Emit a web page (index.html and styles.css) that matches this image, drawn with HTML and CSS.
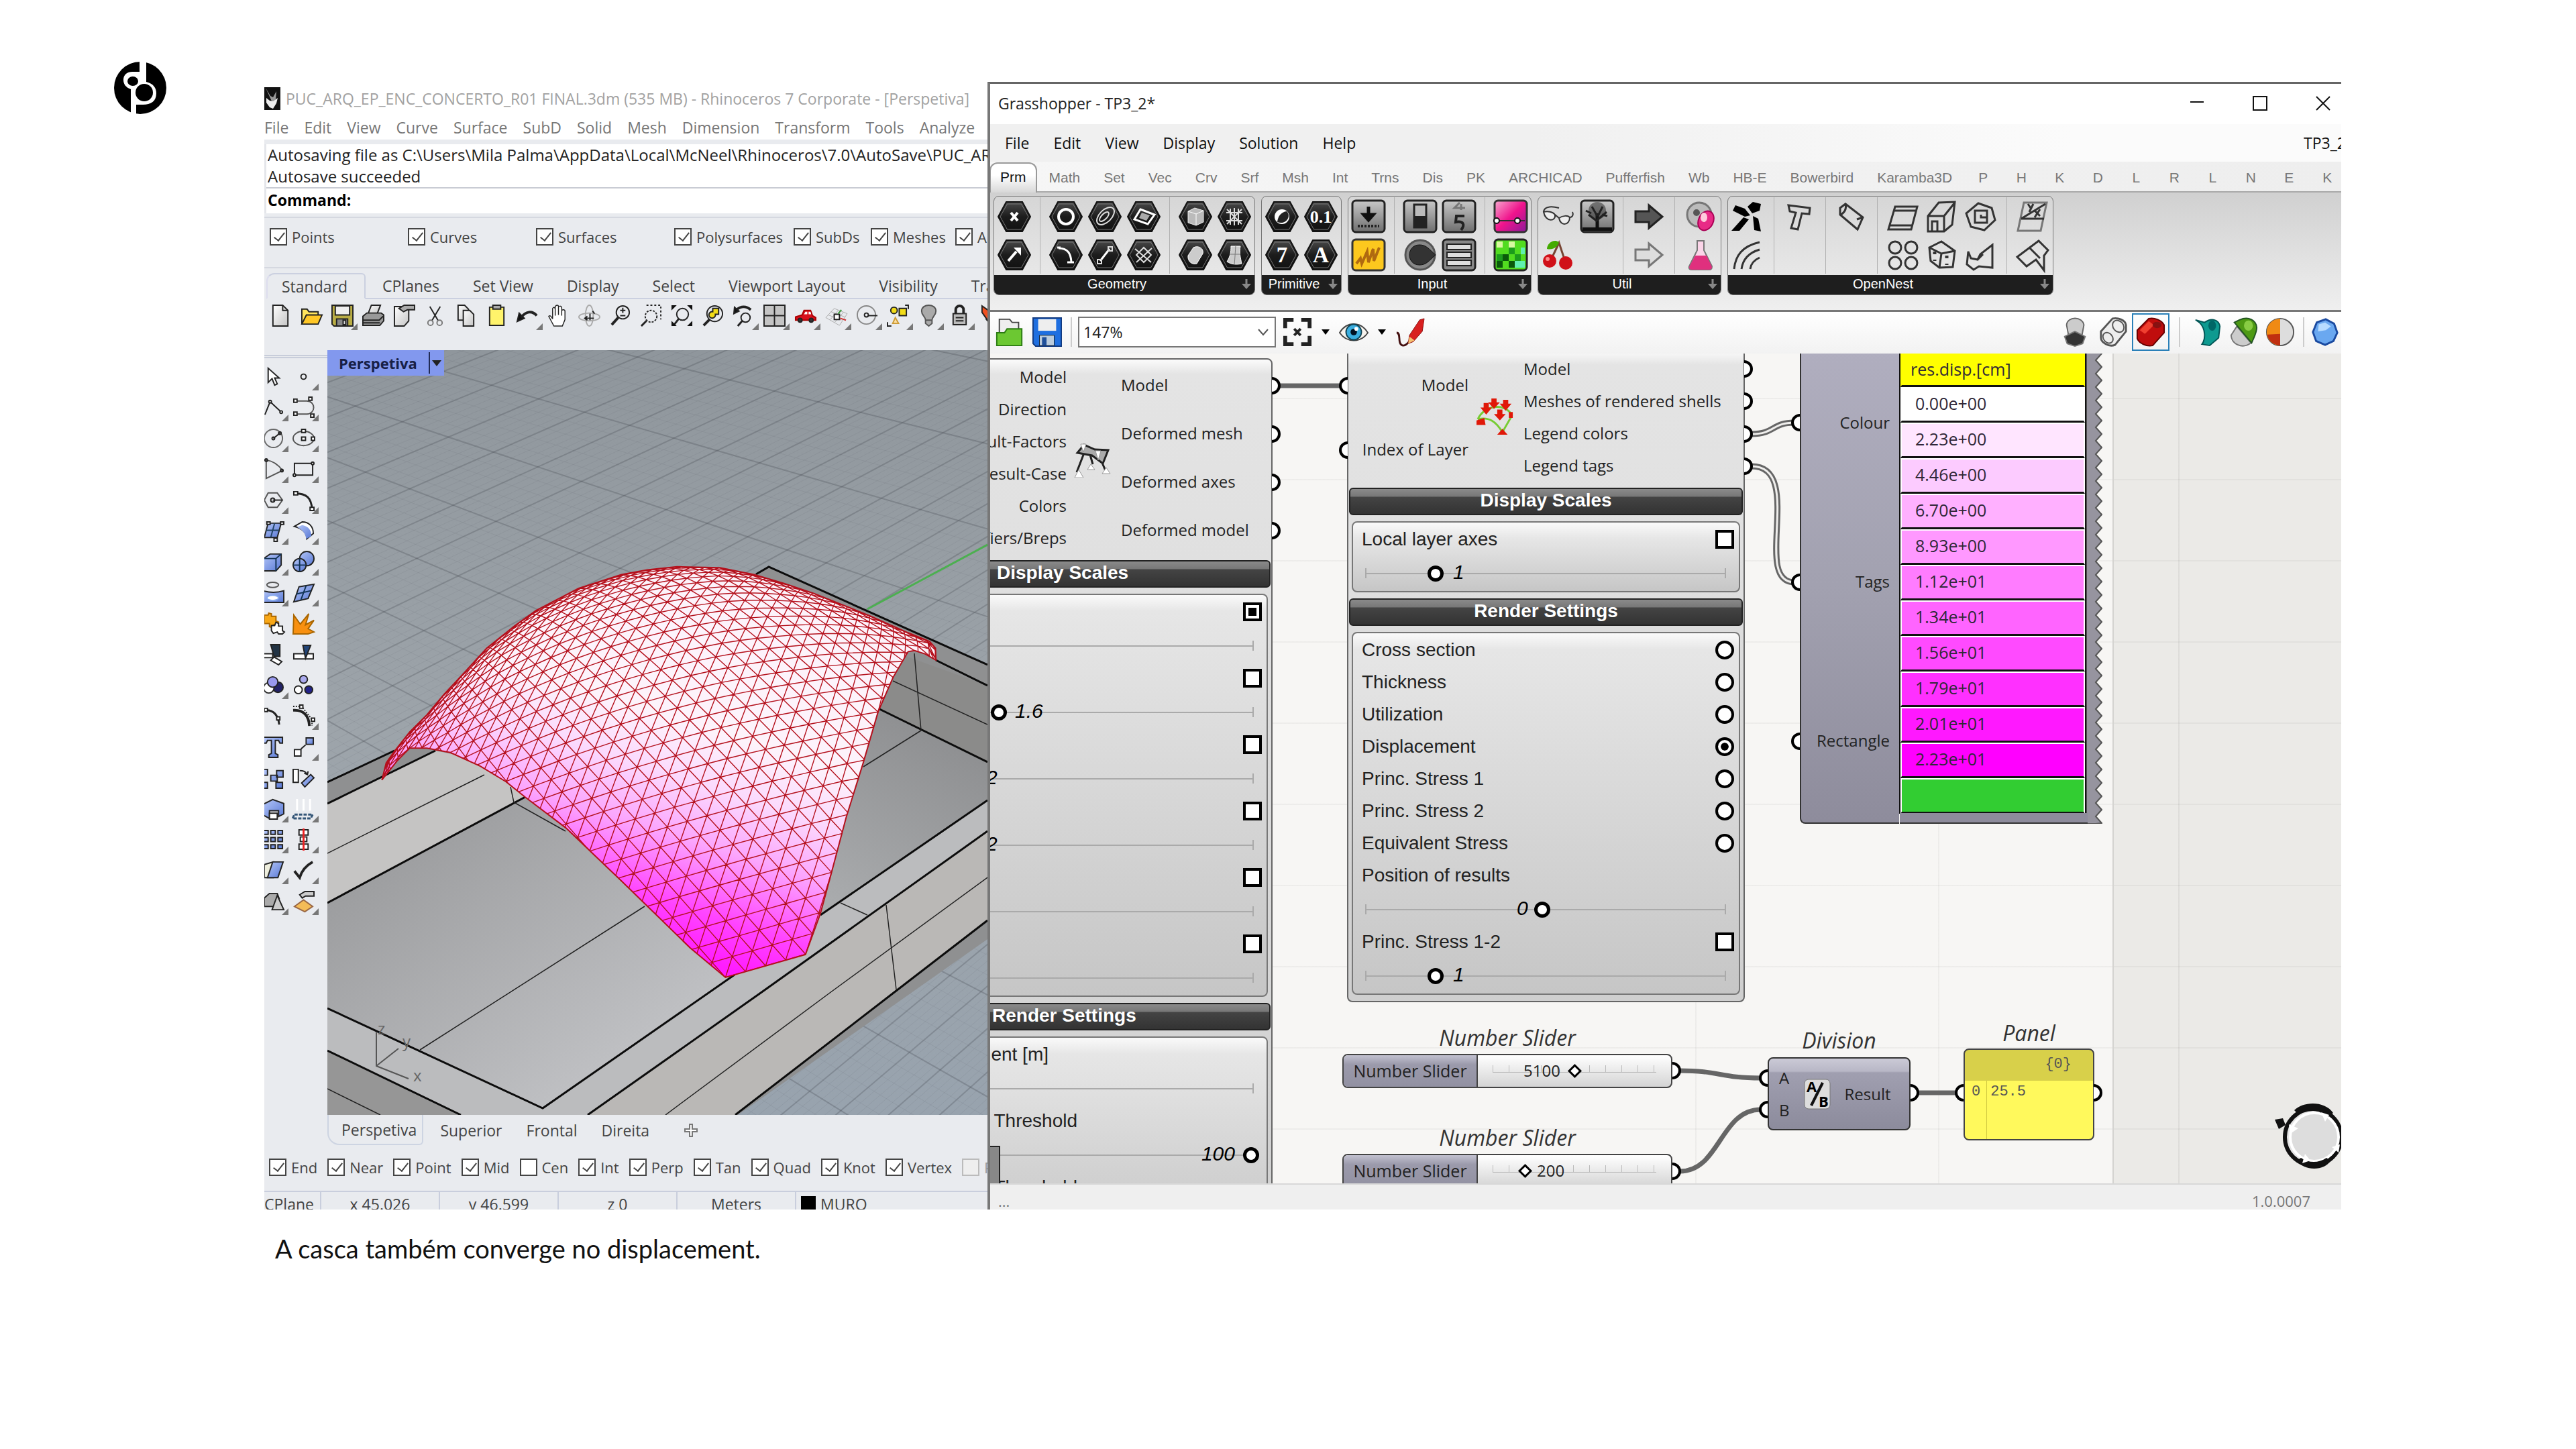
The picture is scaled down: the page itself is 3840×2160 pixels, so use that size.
FILE: index.html
```html
<!DOCTYPE html>
<html lang="pt">
<head>
<meta charset="utf-8">
<title>Casca - displacement</title>
<link rel="stylesheet" href="styles.css">
</head>
<body>
<svg class="defs" aria-hidden="true">
  <defs>
    <linearGradient id="hexg" x1="0" y1="0" x2="0" y2="1"><stop offset="0" stop-color="#4a4a4a"/><stop offset=".5" stop-color="#1c1c1c"/><stop offset="1" stop-color="#111"/></linearGradient>
    <linearGradient id="tileg" x1="0" y1="0" x2="0" y2="1"><stop offset="0" stop-color="#c8c8c8"/><stop offset="1" stop-color="#6e6e6e"/></linearGradient>
    <linearGradient id="blueg" x1="0" y1="0" x2="1" y2="1"><stop offset="0" stop-color="#b4c6f8"/><stop offset="1" stop-color="#5878d4"/></linearGradient>
    <linearGradient id="greyg" x1="0" y1="0" x2="1" y2="1"><stop offset="0" stop-color="#fff"/><stop offset="1" stop-color="#c5c5c5"/></linearGradient>
    <linearGradient id="pinkg" x1="0" y1="0" x2="1" y2="1"><stop offset="0" stop-color="#f7a8d0"/><stop offset=".5" stop-color="#f0148c"/><stop offset="1" stop-color="#8a1a9a"/></linearGradient>
    <symbol id="hex" viewBox="0 0 50 46"><path d="M13 1h24l12 22-12 22H13L1 23z" fill="url(#hexg)" stroke="#111" stroke-width="2"/><path d="M14.500 4h21L46 23 35.500 42h-21L4 23z" fill="none" stroke="#777" stroke-width="1"/></symbol>
    <symbol id="more" viewBox="0 0 16 16"><path d="M8 0v10" fill="none" stroke="#888" stroke-width="3"/><path d="M1 7h14l-7 8z" fill="#888"/></symbol>
  </defs>
</svg>
<main class="slide">
  <header class="brand">
    <svg class="logo" viewBox="0 0 78 78" role="img" aria-label="dp">
      <circle cx="39" cy="39" r="39"/>
      <path class="gap" d="M38 -1h10v31c11 3 15 9 15 17 0 12-8 17-20 17H33v18H25V41c-8-3-11-8-11-14 0-8 6-12 13-12h11z"/>
      <ellipse cx="28" cy="29" rx="8" ry="7"/><circle cx="45" cy="46" r="13"/>
    </svg>
  </header>
  <figure class="shot">
    <div class="desk">
      <section class="rhino">
        <header class="r-title">
          <svg class="r-logo" viewBox="0 0 24 34"><path fill="#111" d="M0 0h24v34H0z"/><path fill="#999" d="M2 1l7 12 4 2 5-9-1 12-5 5z"/><path fill="#eee" d="M3 16l5 4 5 1 7-5-2 8-5 8-5-2-5-7z"/></svg>
          <span>PUC_ARQ_EP_ENC_CONCERTO_R01 FINAL.3dm (535 MB) - Rhinoceros 7 Corporate - [Perspetiva]</span>
        </header>
        <nav class="r-menu"><a href="#">File</a><a href="#">Edit</a><a href="#">View</a><a href="#">Curve</a><a href="#">Surface</a><a href="#">SubD</a><a href="#">Solid</a><a href="#">Mesh</a><a href="#">Dimension</a><a href="#">Transform</a><a href="#">Tools</a><a href="#">Analyze</a></nav>
        <div class="r-log">
          <p>Autosaving file as C:\Users\Mila Palma\AppData\Local\McNeel\Rhinoceros\7.0\AutoSave\PUC_ARQ</p>
          <p>Autosave succeeded</p>
          <label class="r-cmd">Command: <input type="text"></label>
        </div>
        <div class="r-filter">
          <label class="chk"><input type="checkbox" checked>Points</label>
          <label class="chk"><input type="checkbox" checked>Curves</label>
          <label class="chk"><input type="checkbox" checked>Surfaces</label>
          <label class="chk"><input type="checkbox" checked>Polysurfaces</label>
          <label class="chk"><input type="checkbox" checked>SubDs</label>
          <label class="chk"><input type="checkbox" checked>Meshes</label>
          <label class="chk"><input type="checkbox" checked>Annotations</label>
        </div>
        <div class="r-tabs"><button class="on">Standard</button><button>CPlanes</button><button>Set View</button><button>Display</button><button>Select</button><button>Viewport Layout</button><button>Visibility</button><button>Transform</button></div>
        <div class="r-tools">
          <button><svg viewBox="0 0 34 34"><path class="pg" d="M5 1h15l8 8v24H5z"/><path d="M20 1v8h8"/></svg></button>
          <button><svg viewBox="0 0 34 34"><path fill="#ffe45c" d="M2 30V7h8l3 4h14v6"/><path fill="#ffc726" d="M2 30l7-14h24l-6 14z"/></svg></button>
          <button class="fly"><svg viewBox="0 0 34 34"><path fill="#b9ad45" d="M1 1h32v32H4l-3-3z"/><path fill="#eee" d="M6 2h22v14H6z"/><path fill="#888" d="M8 22h17v11H8z"/><path fill="#ddd" d="M18 24h4v7h-4z"/></svg></button>
          <button><svg viewBox="0 0 34 34"><path class="pg" d="M9 14l5-13h14l-5 13z"/><path fill="#999" d="M1 18l6-5h22l4 3v9l-6 7H1z"/><path d="M1 24h25l6-6M1 28h26"/></svg></button>
          <button><svg viewBox="0 0 34 34"><path class="pg" d="M2 3h22v22l-7 8H2z"/><path fill="#aaa" d="M9 6l8-5h16v7H22l-6 3z"/></svg></button>
          <button><svg viewBox="0 0 34 34"><path d="M9 3l13 22M25 3L12 25"/><circle cx="10" cy="28" r="4" stroke="#777"/><circle cx="24" cy="28" r="4" stroke="#777"/></svg></button>
          <button><svg viewBox="0 0 34 34"><path class="pg" d="M5 1h10l6 6v17H5z"/><path class="pg" d="M13 9h10l6 6v18H13z"/></svg></button>
          <button><svg viewBox="0 0 34 34"><path fill="#fff36b" d="M6 4h22v28H6z"/><path fill="#aaa" d="M11 1h12v6H11z"/></svg></button>
          <button class="fly"><svg viewBox="0 0 34 34"><path fill="#111" d="M1 26l3-13 8 8z"/><path stroke-width="4" d="M7 20C14 10 24 9 31 17"/></svg></button>
          <button><svg viewBox="0 0 34 34"><path fill="#fff" stroke-width="1.500" d="M10 33L2 18c2-2 4 0 6 4V6c2-3 4-1 4 1v10V3c2-3 5-2 5 0v13V4c2-3 5-1 5 1v12V9c2-2 5-1 5 1v13l-4 10z"/></svg></button>
          <button><svg viewBox="0 0 34 34"><ellipse cx="17" cy="17" rx="6" ry="16" stroke="#aaa"/><ellipse cx="17" cy="19" rx="16" ry="6" stroke="#aaa"/><path d="M12 21h12M18 14v10M14 18l-4 3 4 3M22 10l3 4"/></svg></button>
          <button><svg viewBox="0 0 34 34"><circle cx="21" cy="12" r="10"/><path d="M17 9h8M21 5v8M17 17h8"/><path stroke-width="4" d="M14 20L4 31"/></svg></button>
          <button><svg viewBox="0 0 34 34"><path stroke-dasharray="3 3" d="M10 1h22v22"/><circle cx="17" cy="18" r="9" stroke-dasharray="3 2"/><path stroke-width="3" d="M10 25L2 33"/></svg></button>
          <button><svg viewBox="0 0 34 34"><circle cx="18" cy="15" r="9"/><path stroke-width="3" d="M12 22L5 31"/><path fill="#111" d="M1 1h8L1 9zM33 1v8l-8-8zM1 33v-8l8 8zM33 33h-8l8-8z" stroke="none"/></svg></button>
          <button><svg viewBox="0 0 34 34"><circle cx="20" cy="14" r="12"/><path fill="#f2dc18" d="M17 6h9v9h-5a5 5 0 1 1-4-4z"/><path stroke-width="4" d="M12 23L3 32"/></svg></button>
          <button class="fly"><svg viewBox="0 0 34 34"><path fill="#111" d="M2 14l1-10 7 6z"/><path stroke-width="4" d="M6 8c7-6 15-6 22 0"/><circle cx="20" cy="20" r="7"/><path stroke-width="3" d="M15 25l-7 8"/></svg></button>
          <button class="fly"><svg viewBox="0 0 34 34"><path fill="#c4c4c4" d="M1 1h32v32H1z"/><path d="M17 1v32M1 17h32"/></svg></button>
          <button class="fly"><svg viewBox="0 0 34 34"><path fill="#d8101c" stroke="#a00" d="M2 19l10-3 3-7h10l3 8 5 3v4H2z"/><path fill="#fff" stroke="none" d="M15 15l2-4h3v4zM22 11h3l1 4h-4z"/><circle cx="9" cy="24" r="3" fill="#333"/><circle cx="26" cy="24" r="3" fill="#333"/></svg></button>
          <button class="fly"><svg viewBox="0 0 34 34"><path stroke="#aaa" stroke-width="1" d="M1 20L14 6l20 8-12 18zM5 16l20 8M9 11l21 8M8 23L20 9M15 27L28 12"/><path fill="#fff" d="M14 15h8v8h-8z"/><path stroke="#393" d="M20 14l5-6"/><path stroke="#c33" d="M23 21l9 3"/></svg></button>
          <button class="fly"><svg viewBox="0 0 34 34"><circle cx="16" cy="16" r="14" stroke="#888"/><circle cx="16" cy="16" r="3"/><path d="M19 17h14"/></svg></button>
          <button class="fly"><svg viewBox="0 0 34 34"><circle cx="11" cy="9" r="5" fill="#f2dc18"/><path fill="#f2dc18" d="M19 6h11v11H19z"/><path fill="#ffe0a0" stroke="#c93" d="M13 20l5 9H9z"/><path d="M28 1h5v6M1 27v6h6"/></svg></button>
          <button class="fly"><svg viewBox="0 0 34 34"><path fill="#aaa" stroke="#555" d="M12 24c0-6-6-7-6-14 0-12 22-12 22 0 0 7-6 8-6 14v5l-5 4-5-4zM12 24h10"/></svg></button>
          <button class="fly"><svg viewBox="0 0 34 34"><path stroke-width="4" d="M11 15V8c0-8 12-8 12 0v7"/><path fill="#bbb" d="M7 14h20v17H7z"/><path d="M11 20h12M11 25h12"/></svg></button>
          <button><svg viewBox="0 0 34 34"><path fill="#f05020" d="M4 2l14 10v20L4 12z"/><path fill="#28a" d="M10 22l10 8v4z"/></svg></button>
        </div>
        <div class="r-body">
          <aside class="r-side">
            <button><svg viewBox="0 0 34 34"><path fill="#fff" d="M9 4v22l6-6 4 10 4-2-4-9h7z"/></svg></button>
            <button class="fly"><svg viewBox="0 0 34 34"><circle cx="17" cy="17" r="4"/></svg></button>
            <button class="fly"><svg viewBox="0 0 34 34"><path d="M4 28L12 8l17 16"/><circle cx="12" cy="8" r="2" fill="#fff"/><circle cx="29" cy="24" r="2" fill="#fff"/></svg></button>
            <button class="fly"><svg viewBox="0 0 34 34"><path d="M4 7h18c14 0 14 20 0 20H4" stroke="#555"/><path fill="#fff" d="M2 4h5v5H2zM2 24h5v5H2zM25 1h5v5h-5zM28 27h5v5h-5z"/></svg></button>
            <button class="fly"><svg viewBox="0 0 34 34"><circle cx="17" cy="17" r="14" stroke="#666"/><path d="M17 17l10-8"/><circle cx="17" cy="17" r="2"/><circle cx="27" cy="9" r="2"/></svg></button>
            <button class="fly"><svg viewBox="0 0 34 34"><ellipse cx="17" cy="17" rx="16" ry="11" stroke="#555"/><path fill="#fff" d="M14 3h6v5h-6zM14 15h6v5h-6zM29 15h5v5h-5z"/></svg></button>
            <button class="fly"><svg viewBox="0 0 34 34"><path d="M6 3v28l25-12C24 9 14 4 6 3z" stroke="#555"/><circle cx="6" cy="3" r="2"/><circle cx="30" cy="19" r="2"/></svg></button>
            <button class="fly"><svg viewBox="0 0 34 34"><path d="M3 8h28v18H3z"/><circle cx="31" cy="8" r="2" fill="#fff"/><circle cx="3" cy="26" r="2" fill="#fff"/></svg></button>
            <button class="fly"><svg viewBox="0 0 34 34"><path d="M3 17l6-11h14l8 11-8 11H9z" stroke="#555"/><circle cx="16" cy="17" r="3"/><path d="M16 17h15"/></svg></button>
            <button class="fly"><svg viewBox="0 0 34 34"><path d="M5 7c16 0 24 6 25 24" stroke-width="3"/><path fill="#fff" d="M2 4h6v5H2zM27 28h6v5h-6z"/></svg></button>
            <button class="fly"><svg viewBox="0 0 34 34"><path class="bl" d="M9 5h20l-6 22H3z"/><path d="M6 16h20M19 5l-6 22" stroke="#246"/><path fill="#fff" d="M7 3h5v4H7zM28 3h5v4h-5zM18 28h5v5h-5z"/></svg></button>
            <button class="fly"><svg viewBox="0 0 34 34"><path fill="#fff" d="M3 10l12-7c10 0 17 7 17 18l-10 8c0-8-6-16-19-19z"/><path class="bl" d="M15 8c10 2 14 8 14 17l-8 4c-1-9-6-14-14-18z" stroke="none"/></svg></button>
            <button class="fly"><svg viewBox="0 0 34 34"><path class="bl" d="M2 12l10-7h17v17l-8 9H2z"/><path d="M2 12h19l8-7M21 12v19" stroke="#135"/></svg></button>
            <button class="fly"><svg viewBox="0 0 34 34"><circle cx="22" cy="12" r="11" class="bl"/><circle cx="11" cy="22" r="10" class="bl"/><path d="M1 22h20M11 12v20" stroke="#135"/></svg></button>
            <button class="fly"><svg viewBox="0 0 34 34"><ellipse cx="16" cy="5" rx="9" ry="4" stroke="#555"/><path class="bl" d="M1 14c10 3 22 3 32 0v18H1z"/><ellipse cx="16" cy="25" rx="9" ry="4" fill="#fff" stroke="#8ae"/></svg></button>
            <button class="fly"><svg viewBox="0 0 34 34"><path class="bl" d="M10 8l23-4-9 22-22 5z"/><path d="M6 19l22-5M21 6l-8 22" stroke="#135"/></svg></button>
            <button><svg viewBox="0 0 34 34"><path fill="#f8a818" stroke="#a60" d="M3 4h6l1-3 4 1v4h7v7l4 2-2 4h-6l-2 4-4-1v-5H3z"/><path fill="#fff" d="M14 20h5l2-5 4 2v4h6v7l3 2-3 3h-6l-2-3-6 2-3-4z"/></svg></button>
            <button><svg viewBox="0 0 34 34"><path fill="#f89010" stroke="#a60" d="M1 33L2 4l10 14L25 2l-5 17 13-7-9 13 9 5-9 3z"/></svg></button>
            <button><svg viewBox="0 0 34 34"><path fill="#234" d="M13 2h14v18H18z"/><path fill="#fff" d="M1 16h15v6H1zM18 21l12 7-5 5-12-7z"/></svg></button>
            <button><svg viewBox="0 0 34 34"><path fill="#fff" d="M2 16h30v8H2z"/><path fill="#247" d="M16 3h12L20 23z"/></svg></button>
            <button class="fly"><svg viewBox="0 0 34 34"><circle cx="24" cy="20" r="8" fill="#226"/><circle cx="10" cy="21" r="8" fill="#fff"/><circle cx="16" cy="12" r="8" fill="#99e"/></svg></button>
            <button><svg viewBox="0 0 34 34"><circle cx="17" cy="8" r="6" fill="#aae"/><circle cx="9" cy="24" r="6" fill="#fff"/><circle cx="25" cy="24" r="6" fill="#228"/></svg></button>
            <button><svg viewBox="0 0 34 34"><path d="M4 8c12-1 20 6 22 22" stroke-width="3"/><path fill="#fff" d="M3 5h5v5H3zM22 18h5v5h-5z"/></svg></button>
            <button class="fly"><svg viewBox="0 0 34 34"><path d="M1 8c16-1 24 8 25 24" stroke-width="4"/><path stroke-dasharray="2 2" d="M1 2h13l16 20v10"/><path fill="#fff" d="M11 0h5v5h-5zM29 20h5v5h-5z"/></svg></button>
            <button><svg viewBox="0 0 34 34"><path class="bl" d="M2 2h29v9h-4l-2-4h-5v20l4 2v4H10v-4l4-2V7H8l-2 4H2z"/></svg></button>
            <button class="fly"><svg viewBox="0 0 34 34"><path class="bl" d="M21 3h11v10H21z"/><path fill="#fff" d="M3 21h10v10H3z"/><path d="M13 20l7-6"/></svg></button>
            <button><svg viewBox="0 0 34 34"><path class="bl" d="M0 4h8v9H0zM13 13h10v9H13zM22 6h10v10H22zM21 24h10v9H21zM0 24h8v9H0z"/></svg></button>
            <button><svg viewBox="0 0 34 34"><path fill="#fff" d="M1 4h8v20H1z"/><path class="bl" d="M14 25l14-13 5 5-14 14z"/><path d="M11 6c6 0 9 1 11 5M18 10l5 2 1-5"/></svg></button>
            <button class="fly"><svg viewBox="0 0 34 34"><path class="bl" d="M2 10l14-7 17 6v16l-8 4v-9H11v12l-9-5z"/><path fill="#fff" d="M11 24h12v9H11z"/></svg></button>
            <button class="fly"><svg viewBox="0 0 34 34"><path stroke="#fff" stroke-width="3" d="M7 2v18M17 2v18M27 2v18"/><path stroke="#357" stroke-width="3" d="M3 26h28l-3 6H0z" stroke-dasharray="5 2"/></svg></button>
            <button class="fly"><svg viewBox="0 0 34 34"><path class="bl" d="M2 3h7v6H2zM13 3h7v6h-7zM24 3h7v6h-7zM2 14h7v6H2zM13 14h7v6h-7zM24 14h7v6h-7zM2 25h7v6H2zM13 25h7v6h-7zM24 25h7v6h-7z"/></svg></button>
            <button class="fly"><svg viewBox="0 0 34 34"><path fill="#fff" d="M10 2h14v8H10zM12 13h10v7H12zM10 24h14v8H10z"/><path stroke="#e22" stroke-width="3" d="M17 0v34"/></svg></button>
            <button class="fly"><svg viewBox="0 0 34 34"><path fill="#eed" d="M3 8l14-4v24H3z"/><path class="bl" d="M16 4h16l-8 24H8z"/></svg></button>
            <button class="fly"><svg viewBox="0 0 34 34"><path stroke-width="4" d="M3 18l8 10C14 18 22 9 31 4"/></svg></button>
            <button class="fly"><svg viewBox="0 0 34 34"><path fill="#aaa" d="M3 12l8-7h12l3 8-9 12H3z"/><path fill="#ccc" d="M15 30l8-22 10 22z"/></svg></button>
            <button class="fly"><svg viewBox="0 0 34 34"><path fill="#f4bc58" stroke="#964" d="M3 25l14-10 14 10-12 8z"/><path fill="#ccc" d="M11 7l8-5h14v7H20l-5 3z"/></svg></button>
          </aside>
          <div class="view">
            <svg class="scene" viewBox="488 522 984 1140" preserveAspectRatio="xMidYMid slice">
              <defs>
                <linearGradient id="sky" x1="0" y1="0" x2="0" y2="1"><stop offset="0" stop-color="#8f969c"/><stop offset=".5" stop-color="#9da4aa"/><stop offset="1" stop-color="#98a3ae"/></linearGradient>
                <linearGradient id="floor" gradientUnits="userSpaceOnUse" x1="640" y1="1240" x2="900" y2="1600"><stop offset="0" stop-color="#9d9ea0"/><stop offset="1" stop-color="#bfc0c3"/></linearGradient>
                <linearGradient id="floor2" gradientUnits="userSpaceOnUse" x1="1400" y1="1060" x2="1250" y2="1350"><stop offset="0" stop-color="#8c8d8f"/><stop offset="1" stop-color="#a9abad"/></linearGradient>
                <linearGradient id="disp" gradientUnits="userSpaceOnUse" x1="1075" y1="1440" x2="1175" y2="1125"><stop offset="0" stop-color="#ff1cff"/><stop offset=".2" stop-color="#ff44ff"/><stop offset=".5" stop-color="#fba6fd"/><stop offset=".75" stop-color="#fbd9fd"/><stop offset="1" stop-color="#fdf3fb"/></linearGradient>
                <clipPath id="shell"><path id="shell-clip" d=""/></clipPath>
              </defs>
              <path fill="url(#sky)" d="M488 522h984v1140H488z"/>
              <g id="grid"></g>
              <path stroke="#4caf50" stroke-width="3" d="M1293 908L1472 812"/>
              <path fill="#8f9091" d="M488 1166L1146 845 1472 991V1400L1100 1662H488z"/>
              <path fill="#8b8b8a" d="M1300 960L1472 1022V1136L1300 1050z"/>
              <path fill="#c5c4c3" d="M488 1198L649 1119 800 1150V1188L783 1188 488 1346z"/>
              <path fill="url(#floor)" d="M488 1346L783 1188 1250 1110 1223 1364 809 1652 488 1503z"/>
              <path fill="url(#floor2)" d="M1200 1160L1309 1056 1472 1136V1193L1223 1364z"/>
              <path fill="#bbbcbe" d="M488 1503L809 1652 1223 1364 1472 1193V1239L876 1662H687L488 1566z"/>
              <path fill="#969696" d="M488 1566L687 1662H488z"/>
              <path fill="#bab8b6" d="M876 1662L1472 1239V1372L1096 1662z"/>
              <g class="edge">
                <path d="M488 1166L588 1119M488 1198L649 1119M488 1346L783 1188M1127 856l19-11L1472 991M1395 984l77 38M1309 1056l163 80M488 1503L809 1652 1095 1453M1223 1364L1472 1193M876 1662L1134 1480 1472 1239M1096 1662L1332 1480 1472 1372M488 1566L687 1662"/>
                <path class="thin" d="M488 1272L722 1155M761 1173l5 23 77 43M626 1565L961 1351M1331 1015l141 65M1363 974l10 115-86 54M1253 1346l40 18M1321 1349l15 126M992 1662L1237 1480 1472 1308M488 1623l79 39"/>
              </g>
              <path id="shell-fill" fill="url(#disp)" d=""/>
              <g id="mesh" clip-path="url(#shell)"></g>
              <path id="shell-line" class="rim" d=""/>
              <g class="axis"><path d="M561 1538v51l48 19M561 1589l33-26"/><text x="563" y="1542">z</text><text x="600" y="1561">y</text><text x="616" y="1612">x</text></g>
            </svg>
            <button class="view-name">Perspetiva<i></i></button>
          </div>
        </div>
        <div class="v-tabs"><button class="on">Perspetiva</button><button>Superior</button><button>Frontal</button><button>Direita</button><button aria-label="+"><svg viewBox="0 0 20 20"><path d="M8 1h4v7h7v4h-7v7H8v-7H1V8h7z"/></svg></button></div>
        <div class="r-snap">
          <label class="chk"><input type="checkbox" checked>End</label><label class="chk"><input type="checkbox" checked>Near</label><label class="chk"><input type="checkbox" checked>Point</label><label class="chk"><input type="checkbox" checked>Mid</label><label class="chk"><input type="checkbox">Cen</label><label class="chk"><input type="checkbox" checked>Int</label><label class="chk"><input type="checkbox" checked>Perp</label><label class="chk"><input type="checkbox" checked>Tan</label><label class="chk"><input type="checkbox" checked>Quad</label><label class="chk"><input type="checkbox" checked>Knot</label><label class="chk"><input type="checkbox" checked>Vertex</label><label class="chk off"><input type="checkbox" disabled>Project</label>
        </div>
        <footer class="r-status"><span>CPlane</span><span>x 45.026</span><span>y 46.599</span><span>z 0</span><span>Meters</span><span><b class="swatch"></b>MURO</span></footer>
      </section>

      <section class="gh">
        <header class="g-title"><span>Grasshopper - TP3_2*</span>
          <button aria-label="Minimize"><svg viewBox="0 0 22 22"><path d="M1 9h20"/></svg></button>
          <button aria-label="Maximize"><svg viewBox="0 0 22 22"><path d="M1 1h20v20H1z"/></svg></button>
          <button aria-label="Close"><svg viewBox="0 0 22 22"><path d="M1 1l20 20M21 1L1 21"/></svg></button>
        </header>
        <nav class="g-menu"><a href="#">File</a><a href="#">Edit</a><a href="#">View</a><a href="#">Display</a><a href="#">Solution</a><a href="#">Help</a><span>TP3_2*</span></nav>
        <div class="g-tabs"><button class="on">Prm</button><button>Math</button><button>Set</button><button>Vec</button><button>Crv</button><button>Srf</button><button>Msh</button><button>Int</button><button>Trns</button><button>Dis</button><button>PK</button><button>ARCHICAD</button><button>Pufferfish</button><button>Wb</button><button>HB-E</button><button>Bowerbird</button><button>Karamba3D</button><button>P</button><button>H</button><button>K</button><button>D</button><button>L</button><button>R</button><button>L</button><button>N</button><button>E</button><button>K</button></div>
        <div class="ribbon">
          <section class="grp">
            <div class="grp-body">
              <div class="cells">
                <svg viewBox="0 0 50 46"><use href="#hex"/><path class="w4" d="M20 17l10 12M30 17L20 29"/></svg>
                <svg viewBox="0 0 50 46"><use href="#hex"/><path class="w4" d="M16 32l12-14"/><path class="wf" d="M24 12h11v12z"/></svg>
              </div>
              <div class="cells">
                <svg viewBox="0 0 50 46"><use href="#hex"/><circle cx="25" cy="23" r="11" class="w4"/></svg>
                <svg viewBox="0 0 50 46"><use href="#hex"/><path class="w3" d="M14 13c14 0 18 8 19 20M27 34h10M12 12h5"/></svg>
                <svg viewBox="0 0 50 46"><use href="#hex"/><ellipse cx="26" cy="22" rx="16" ry="9" class="w2" transform="rotate(-45 26 22)"/><ellipse cx="24" cy="23" rx="9" ry="4" class="w2" transform="rotate(-45 24 23)"/></svg>
                <svg viewBox="0 0 50 46"><use href="#hex"/><path class="w3" d="M18 32l14-18"/><path class="w2" d="M30 11h6v6h-6zM14 30h6v6h-6z"/></svg>
                <svg viewBox="0 0 50 46"><use href="#hex"/><path class="w3" d="M20 12l21 8-10 14-20-7z"/><path fill="#aaa" d="M22 17l12 4-5 8-11-4z"/></svg>
                <svg viewBox="0 0 50 46"><use href="#hex"/><path class="w2" d="M25 12l11 11-11 11-11-11zM12 14l24 20M37 13L14 34"/></svg>
              </div>
              <div class="cells">
                <svg viewBox="0 0 50 46"><use href="#hex"/><path fill="#bbb" stroke="#eee" d="M14 15l10-5 13 4v17l-11 5-12-4z"/><path stroke="#fff" fill="none" d="M14 15l12 4v17M26 19l11-5"/></svg>
                <svg viewBox="0 0 50 46"><use href="#hex"/><path fill="#ccc" stroke="#fff" d="M14 24l8-12c8-4 16 2 14 9l-9 15c-8 2-14-4-13-12z"/></svg>
                <svg viewBox="0 0 50 46"><use href="#hex"/><path class="w2" d="M13 17h24M13 29h24M19 11v24M31 11v24M14 12l22 22M36 12L14 34M25 10v26"/></svg>
                <svg viewBox="0 0 50 46"><use href="#hex"/><path fill="#ccc" stroke="#fff" d="M20 10h14c-2 10 0 16 2 26-8 2-16 1-22-3 5-8 6-14 6-23z"/><path stroke="#777" fill="none" d="M27 10c-1 12-1 18-2 27M18 22h16"/></svg>
              </div>
            </div>
            <h3>Geometry<svg><use href="#more"/></svg></h3>
          </section>
          <section class="grp">
            <div class="grp-body">
              <div class="cells">
                <svg viewBox="0 0 50 46"><use href="#hex"/><circle cx="25" cy="23" r="11" fill="#fff"/><path fill="#222" d="M32 15c-8 1-13 7-14 16 12 5 22-8 14-16z"/></svg>
                <svg viewBox="0 0 50 46"><use href="#hex"/><text x="25" y="34">7</text></svg>
                <svg viewBox="0 0 50 46"><use href="#hex"/><text x="25" y="32" class="sm">0.1</text></svg>
                <svg viewBox="0 0 50 46"><use href="#hex"/><text x="25" y="34">A</text></svg>
              </div>
            </div>
            <h3>Primitive<svg><use href="#more"/></svg></h3>
          </section>
          <section class="grp">
            <div class="grp-body">
              <div class="cells">
                <svg viewBox="0 0 50 46"><rect x="1" y="-1" width="48" height="47" rx="5" class="tile"/><path d="M25 8v16M18 20l7 8 7-8z" stroke="#111" stroke-width="5"/><path stroke="#222" stroke-width="4" stroke-dasharray="3 2" d="M9 37h32"/></svg>
                <svg viewBox="0 0 50 46"><rect x="1" y="0" width="48" height="46" rx="5" fill="#fcc81e" stroke="#333" stroke-width="3"/><path fill="none" stroke="#b06a10" stroke-width="4" d="M7 36l6-8 2 8 8-18 2 16 7-20 1 18 8-20"/></svg>
              </div>
              <div class="cells">
                <svg viewBox="0 0 50 46"><rect x="1" y="-1" width="48" height="47" rx="5" class="tile"/><path fill="#bbb" stroke="#222" stroke-width="3" d="M16 5h18v34H16z"/><path fill="#222" d="M16 22h18v17H16z"/></svg>
                <svg viewBox="0 0 50 46"><circle cx="25" cy="23" r="22" fill="#888" stroke="#555" stroke-width="3"/><path fill="#333" stroke="#111" d="M24 8c10 0 14 6 24 15-10 9-14 15-24 15-20 0-20-30 0-30z"/></svg>
                <svg viewBox="0 0 50 46"><rect x="1" y="-1" width="48" height="47" rx="5" class="tile"/><path fill="none" stroke="#777" stroke-width="3" d="M26 2l-8 8h16M28 4v9"/><path fill="none" stroke="#222" stroke-width="4" d="M33 22H21l-1 9c12-2 14 4 8 12"/></svg>
                <svg viewBox="0 0 50 46"><rect x="1" y="0" width="48" height="46" rx="5" fill="#888" stroke="#222" stroke-width="3"/><path fill="#ddd" stroke="#222" stroke-width="2" d="M7 7h36v8H7zM7 19h36v8H7zM7 31h36v8H7z"/></svg>
              </div>
              <div class="cells">
                <svg viewBox="0 0 50 46"><rect x="1" y="-1" width="48" height="47" rx="5" fill="url(#pinkg)" stroke="#333" stroke-width="3"/><path stroke="#333" stroke-width="2" d="M4 29h42"/><circle cx="4" cy="29" r="4" fill="#fff" stroke="#111" stroke-width="2"/><circle cx="35" cy="29" r="4" fill="#fff" stroke="#111" stroke-width="2"/></svg>
                <svg viewBox="0 0 50 46"><rect x="1" y="0" width="48" height="46" rx="5" fill="#52dc20" stroke="#222" stroke-width="3"/><path fill="#d8f8a0" d="M4 3h9v9H4zM22 3h9v9h-9z"/><path fill="#0a5a0a" d="M13 22h9v10h-9zM4 32h9v10H4zM22 32h9v10h-9z"/><path fill="#1c9c1c" d="M22 12h9v10h-9zM4 22h9v10H4zM31 22h9v10h-9z"/><path fill="#60f0b0" d="M31 32h15v10H31zM40 12h6v10h-6z"/></svg>
              </div>
            </div>
            <h3>Input<svg><use href="#more"/></svg></h3>
          </section>
          <section class="grp">
            <div class="grp-body">
              <div class="cells">
                <svg viewBox="0 0 50 46"><path fill="#eee" stroke="#333" stroke-width="2" d="M3 16c6-2 14 0 17 4 2 10-14 12-17-4zM26 25c6-4 13-4 16-1 0 12-14 14-16 1zM20 20l6 5"/><path fill="none" stroke="#333" stroke-width="2" d="M3 16C4 6 18 8 26 10M42 24c4 0 6-4 4-8"/></svg>
                <svg viewBox="0 0 50 46"><path fill="none" stroke="#743" stroke-width="3" d="M16 26L26 5l8 24"/><path fill="#4a0" d="M26 4C18-2 8 6 8 14c8 2 16-2 18-10z"/><circle cx="12" cy="32" r="10" fill="#d01018"/><circle cx="36" cy="35" r="10" fill="#d01018"/><circle cx="9" cy="29" r="3" fill="#f88"/></svg>
                <svg viewBox="0 0 50 46"><rect x="1" y="-1" width="48" height="47" rx="5" class="tile"/><path stroke="#111" stroke-width="5" d="M25 40V18"/><path fill="none" stroke="#222" stroke-width="3" d="M25 30L12 20M25 28l14-12M25 22l-8-14M26 22l7-14M8 14l8 4M40 22l-8-2"/><circle cx="25" cy="14" r="13" fill="#222" opacity=".5"/><path fill="#111" d="M3 39h44v5H3z"/></svg>
                <span></span>
              </div>
              <div class="cells">
                <svg viewBox="0 0 50 46"><path fill="#555" stroke="#222" stroke-width="3" d="M5 15h20V6l20 17-20 17v-9H5z"/></svg>
                <svg viewBox="0 0 50 46"><path fill="#ddd" stroke="#777" stroke-width="3" d="M5 15h20V6l20 17-20 17v-9H5z"/></svg>
              </div>
              <div class="cells">
                <svg viewBox="0 0 50 46"><circle cx="23" cy="20" r="18" fill="#bbb" stroke="#777" stroke-width="3"/><circle cx="19" cy="17" r="5" fill="#555"/><ellipse cx="33" cy="29" rx="11" ry="15" fill="#e82a86" stroke="#a05" stroke-width="2" transform="rotate(25 33 29)"/><ellipse cx="30" cy="24" rx="5" ry="7" fill="#fcd"/></svg>
                <svg viewBox="0 0 50 46"><path fill="#fbd4e8" stroke="#777" stroke-width="2" d="M20 2h10v14l12 24c0 4-2 5-4 5H12c-3 0-5-1-4-5l12-24z"/><path fill="#e0307e" d="M17 24h17l8 17c0 2-2 4-4 4H12c-3 0-4-2-4-4z"/></svg>
              </div>
            </div>
            <h3>Util<svg><use href="#more"/></svg></h3>
          </section>
          <section class="grp">
            <div class="grp-body">
              <div class="cells ln">
                <svg viewBox="0 0 50 46"><path fill="#000" stroke="none" d="M24 8l8-7 12 3-2 10-11 4zM2 14l4-8 14 5 8 10-8 2zM18 24l8 3-14 17H0zM32 22l8 4 4 19-10-2z"/></svg>
                <svg viewBox="0 0 50 46"><path d="M4 44C6 24 16 10 42 4M15 44c2-14 10-24 27-29M28 44c1-8 5-13 14-17"/></svg>
              </div>
              <div class="cells ln"><svg viewBox="0 0 50 46"><path d="M8 6l32 4-1 9-11-1-6 24-10-2 7-23-9-2z"/></svg><span></span></div>
              <div class="cells ln"><svg viewBox="0 0 50 46"><path d="M8 10l8-6 26 20-8 18L8 20zM8 20c6-2 10-8 8-16M42 24l-9 3"/></svg><span></span></div>
              <div class="cells ln">
                <svg viewBox="0 0 50 46"><path d="M13 8h33l-9 34H3zM11 14h32M5 36h33"/></svg>
                <svg viewBox="0 0 50 46"><circle cx="13" cy="12" r="9"/><circle cx="37" cy="12" r="9"/><circle cx="13" cy="35" r="9"/><circle cx="37" cy="35" r="9"/></svg>
                <svg viewBox="0 0 50 46"><path d="M4 22L20 2l24-1-4 34-12 10H4zM4 22h24v22M28 22L44 2M10 44V30h8v14"/></svg>
                <svg viewBox="0 0 50 46"><path d="M6 12L24 3l20 14-3 24-20 1L8 32zM6 12l18 9 20-4M24 21l-3 21"/><path stroke-width="5" stroke-dasharray="4 8" d="M14 18v14M32 24v14"/></svg>
                <svg viewBox="0 0 50 46"><path d="M21 3l20 7 5 18-16 15-20-5-7-20zM16 14h18v18H16zM34 24H25v-4"/></svg>
                <svg viewBox="0 0 50 46"><path d="M6 18l4 10 10 2 4-8 18-14v34l-20-2-8 5-10-8z M20 30l8-8"/></svg>
              </div>
              <div class="cells ln">
                <svg viewBox="0 0 50 46"><path stroke="#777" d="M12 2h34l-9 42H3z"/><path d="M8 26h34M8 26L44 4M18 4l4 6M26 4l-6 12M28 14l8 8M36 12l-8 12"/></svg>
                <svg viewBox="0 0 50 46"><path d="M2 26L34 2l14 14-6 8 0 22-12-16-14 10z M20 12l16 16"/></svg>
              </div>
            </div>
            <h3>OpenNest<svg><use href="#more"/></svg></h3>
          </section>
        </div>
        <div class="g-bar">
          <button aria-label="Open"><svg viewBox="0 0 46 46"><path fill="#eee" stroke="#444" stroke-width="2" d="M7 24V3h16l4 5h10v16z"/><path fill="#6cc832" stroke="#2a7a12" stroke-width="2" d="M3 44V24h12l4-6h23v26z"/></svg></button>
          <button aria-label="Save"><svg viewBox="0 0 46 46"><path fill="#1f6fe0" stroke="#123a80" stroke-width="2" d="M1 1h44v44H5l-4-4z"/><path fill="#eee" d="M9 3h28v18H9z"/><path fill="#bcd" stroke="#123" d="M11 28h23v16H11z"/><path fill="#1f4f9a" d="M15 31h7v13h-7z"/></svg></button>
          <i class="sep"></i>
          <select aria-label="Zoom"><option>147%</option></select>
          <button aria-label="Zoom extents"><svg viewBox="0 0 46 46"><path fill="none" stroke="#222" stroke-width="6" d="M4 17V4h13M29 4h13v13M42 29v13H29M17 42H4V29"/><path stroke="#222" stroke-width="4" d="M18 18l10 10M28 18L18 28"/></svg></button>
          <i class="tri"></i>
          <button aria-label="Preview"><svg viewBox="0 0 46 46"><path fill="#f8f4ee" stroke="#444" stroke-width="2" d="M1 24C12 6 34 6 45 24 34 40 12 40 1 24z"/><circle cx="23" cy="23" r="12" fill="#3aaee0" stroke="#145" stroke-width="2"/><circle cx="23" cy="23" r="5" fill="#012"/><circle cx="27" cy="18" r="3" fill="#fff"/></svg></button>
          <i class="tri"></i>
          <button aria-label="Sketch"><svg viewBox="0 0 46 46"><path fill="none" stroke="#411" stroke-width="3" d="M2 24c8 0 0 18 10 20 6 0 8-6 12-8"/><path fill="#d82020" stroke="#811" d="M22 28L38 4l7-2-3 20-14 16-8 3z"/><path fill="#f4c070" d="M22 30l8 6-10 5z"/></svg></button>
          <span class="grow"></span>
          <button aria-label="No preview"><svg viewBox="0 0 46 46"><path fill="#ccc" stroke="#666" stroke-width="2" d="M9 12C10-2 34-2 36 12l-3 16H12z"/><path fill="#333" stroke="#777" stroke-width="2" d="M6 30l16-8 16 8-4 11-12 4-12-4z"/></svg></button>
          <button aria-label="Wire preview"><svg viewBox="0 0 46 46"><path fill="#eee" stroke="#555" stroke-width="3" d="M4 22L22 2c8-2 20 2 21 10v10L26 43c-10 4-22-4-22-11z"/><ellipse cx="31" cy="14" rx="8" ry="10" transform="rotate(-40 31 14)" fill="none" stroke="#555" stroke-width="2"/><ellipse cx="15" cy="32" rx="7" ry="9" transform="rotate(-40 15 32)" fill="none" stroke="#555" stroke-width="2"/></svg></button>
          <button class="on" aria-label="Shaded preview"><svg viewBox="0 0 46 46"><path fill="#c00d0d" stroke="#600" stroke-width="2" d="M2 20L20 2c8-2 20 2 24 10v12L26 44c-10 2-22-4-24-11z"/><path fill="#f04030" d="M6 20L20 6l8 6-14 14z"/><ellipse cx="33" cy="12" rx="7" ry="5" fill="#811"/></svg></button>
          <i class="sep wide"></i>
          <button class="slim" aria-label="Selected only"><svg viewBox="0 0 46 46"><path fill="#0e9a90" stroke="#055" stroke-width="2" d="M4 4l14 4C30 0 40 4 42 14l-2 18-14 12-12-2c6-8 6-24-4-34z"/><ellipse cx="30" cy="13" rx="6" ry="8" fill="#066"/></svg></button>
          <button class="slim" aria-label="Document settings"><svg viewBox="0 0 46 46"><path fill="#ccc" stroke="#777" stroke-width="2" d="M3 28L12 14l22 26c-14 10-30 2-31-12z"/><path fill="#4e9a14" stroke="#252" stroke-width="2" d="M8 8l8-4C30-2 42 4 43 16c0 8-4 14-8 24z"/><ellipse cx="30" cy="13" rx="7" ry="8" fill="#8c4"/></svg></button>
          <button class="slim" aria-label="Quality"><svg viewBox="0 0 46 46"><circle cx="23" cy="23" r="21" fill="#ddd" stroke="#555" stroke-width="2"/><path fill="#f08a14" d="M23 2v42a21 21 0 0 1 0-42z"/><path fill="#c03010" d="M23 26v18C12 43 4 36 3 27z"/></svg></button>
          <i class="sep"></i>
          <button class="last" aria-label="Mesh"><svg viewBox="0 0 46 46"><path fill="#6aa8f0" stroke="#1a4aa0" stroke-width="3" d="M10 8l14-5 13 7 5 14-6 13-13 6-14-6-5-14z"/><path fill="#b8dcff" d="M13 11l10-3 9 6-8 6-12 2z"/></svg></button>
        </div>

        <div class="canvas">
          <div class="node kar a">
            <div class="head">
              <div class="ins"><span>Model</span><span>Direction</span><span>Result-Factors</span><span>Result-Case</span><span>Colors</span><span>Identifiers/Breps</span></div>
              <svg viewBox="0 0 56 56"><path fill="#aaa" stroke="#222" stroke-width="3" d="M5 19l10-12 16 7 20 1-8 20-16-12zM14 22L4 48M24 22l4 14M42 34l6 14"/><path fill="#fff" stroke="#999" d="M1 56l6-12 7 12zM20 44l5-8 6 8zM42 50l6-9 6 9zM10 6h8l-4 12zM32 16h8l-4 14z"/></svg>
              <div class="outs wide"><span>Model</span><span>Deformed mesh</span><span>Deformed axes</span><span>Deformed model</span></div>
            </div>
            <h4 class="left">Display Scales</h4>
            <div class="box">
              <div class="row"><input type="checkbox" checked></div><div class="sl"><input type="range" value="0"></div>
              <div class="row"><input type="checkbox"></div><div class="sl"><input type="range" value="26"><output class="o16">1.6</output></div>
              <div class="row"><input type="checkbox"></div><div class="sl"><input type="range" value="8"><output class="o2">2</output></div>
              <div class="row"><input type="checkbox"></div><div class="sl"><input type="range" value="8"><output class="o2">2</output></div>
              <div class="row"><input type="checkbox"></div><div class="sl"><input type="range" value="8"></div>
              <div class="row"><input type="checkbox"></div><div class="sl"><input type="range" value="8"></div>
            </div>
            <h4 class="left r">Render Settings</h4>
            <div class="box">
              <label class="row seg">Segment [m]</label><div class="sl"><input type="range" value="0"></div>
              <label class="row thr">Threshold</label><div class="sl"><input type="range" value="100"><output class="o100">100</output></div>
              <label class="row thr">Threshold</label><div class="sl"><input type="range" value="0"></div>
            </div>
          </div>

          <div class="node kar b">
            <div class="head">
              <div class="ins tall"><span>Model</span><span>Index of Layer</span></div>
              <svg viewBox="0 0 58 56"><path fill="none" stroke="#7c3" stroke-width="3" d="M2 32C12 10 44 6 55 26M2 32c18-4 28 4 38 20l15-26"/><path fill="#e01808" d="M11 7h8v7h5l-9 11-9-11h5zM23 0h8v6h5l-9 10-9-10h5zM41 2h8v6h5l-9 11-9-11h5zM32 17h8v7h5l-9 10-9-10h5zM0 34l12-4 2 11H0zM32 56l8-9 8 9zM50 21h6v9h-6z"/></svg>
              <div class="outs"><span>Model</span><span>Meshes of rendered shells</span><span>Legend colors</span><span>Legend tags</span></div>
            </div>
            <h4>Display Scales</h4>
            <div class="box">
              <label class="row">Local layer axes<input type="checkbox"></label>
              <div class="sl"><input type="range" value="19"><output class="o1">1</output></div>
            </div>
            <h4>Render Settings</h4>
            <div class="box">
              <label class="row">Cross section<input type="radio" name="res"></label>
              <label class="row">Thickness<input type="radio" name="res"></label>
              <label class="row">Utilization<input type="radio" name="res"></label>
              <label class="row">Displacement<input type="radio" name="res" checked></label>
              <label class="row">Princ. Stress 1<input type="radio" name="res"></label>
              <label class="row">Princ. Stress 2<input type="radio" name="res"></label>
              <label class="row">Equivalent Stress<input type="radio" name="res"></label>
              <label class="row">Position of results</label>
              <div class="sl"><input type="range" value="49"><output class="o0">0</output></div>
              <label class="row">Princ. Stress 1-2<input type="checkbox"></label>
              <div class="sl"><input type="range" value="19"><output class="o1">1</output></div>
            </div>
          </div>

          <div class="legend">
            <div class="l-in"><span>Colour</span><span>Tags</span><span>Rectangle</span></div>
            <ul><li class="c0">res.disp.[cm]</li><li class="c1">0.00e+00</li><li class="c2">2.23e+00</li><li class="c3">4.46e+00</li><li class="c4">6.70e+00</li><li class="c5">8.93e+00</li><li class="c6">1.12e+01</li><li class="c7">1.34e+01</li><li class="c8">1.56e+01</li><li class="c9">1.79e+01</li><li class="c10">2.01e+01</li><li class="c11">2.23e+01</li><li class="c12"></li></ul>
            <svg class="zig" width="26" height="711"><path id="zig" d=""/></svg>
          </div>

          <div class="num n1"><h5>Number Slider</h5><label><span>Number Slider</span><div class="track"><input type="range" value="50"><output>5100</output></div></label></div>
          <div class="num n2"><h5>Number Slider</h5><label><span>Number Slider</span><div class="track"><input type="range" value="18"><output>200</output></div></label></div>

          <div class="div-node"><h5>Division</h5><div class="div-body"><div class="ab"><span>A</span><span>B</span></div>
            <svg viewBox="0 0 40 46"><rect x="1" y="1" width="38" height="44" rx="6" fill="#ddd" stroke="#777"/><text x="4" y="20">A</text><text x="22" y="42">B</text><path stroke="#111" stroke-width="4" d="M28 6L11 40"/></svg><span>Result</span></div></div>

          <div class="panel-node"><h5>Panel</h5><div class="panel-body"><div class="path">{0}</div><div class="val"><span>0</span><span>25.5</span></div></div></div>

          <svg class="wires" viewBox="1476 527 2014 1237" width="2014" height="1237">
            <path class="wire w" d="M1907 575h92M2504 1596c60 0 60 11 121 11M2504 1746c60 0 60-92 121-92M2858 1629h60"/>
            <path class="wire" d="M2611 647c35 0 30-17 64-17M2611 695c80 0 0 173 64 173"/>
            <path class="wire in" d="M2611 647c35 0 30-17 64-17M2611 695c80 0 0 173 64 173"/>
            <g class="grip">
              <path d="M1896 564a11 11 0 0 1 0 22M1896 636a11 11 0 0 1 0 22M1896 708a11 11 0 0 1 0 22M1896 780a11 11 0 0 1 0 22M2600 539a11 11 0 0 1 0 22M2600 587a11 11 0 0 1 0 22M2600 636a11 11 0 0 1 0 22M2600 684a11 11 0 0 1 0 22M2493 1585a11 11 0 0 1 0 22M2493 1735a11 11 0 0 1 0 22M2848 1618a11 11 0 0 1 0 22M3121 1618a11 11 0 0 1 0 22"/>
              <path d="M2009 564a11 11 0 0 0 0 22M2009 660a11 11 0 0 0 0 22M2683 619a11 11 0 0 0 0 22M2683 857a11 11 0 0 0 0 22M2683 1094a11 11 0 0 0 0 22M2635 1596a11 11 0 0 0 0 22M2635 1643a11 11 0 0 0 0 22M2927 1618a11 11 0 0 0 0 22"/>
            </g>
            <g><circle cx="3448" cy="1695" r="42" fill="#e4e4e4" stroke="#111" stroke-width="6"/><circle cx="3450" cy="1695" r="36" fill="#ddd" stroke="#fff" stroke-width="4"/><path fill="#111" d="M3391 1669l12-2 4 10-10 6zM3420 1655c14-14 46-14 58 4l-8 6c-14-12-30-12-44-4zM3424 1730c10 16 42 16 50 0l-6-4c-12 8-26 8-38 0z"/><path fill="#fff" d="M3460 1658l6 14 6-10zM3412 1676l14 6-12 8zM3488 1706l-12 4 10 8zM3436 1720l-4 14 12-4z"/></g>
            <path fill="#888" stroke="#222" stroke-width="2" d="M1470 1709h20v60h-20z"/>
          </svg>
        </div>
        <footer class="g-status"><span>...</span><span>1.0.0007</span></footer>
      </section>
    </div>
    <figcaption>A casca também converge no displacement.</figcaption>
  </figure>
</main>
<script src="script.js"></script>
</body>
</html>
```
FILE: styles.css
```css
* { box-sizing: border-box; }
body { margin: 0; background: #fff; font-family: "Open Sans", "Noto Sans", sans-serif; color: #222; }
button { border: 0; background: none; padding: 0; font: inherit; color: inherit; }
a { color: inherit; text-decoration: none; }
h3, h4, h5, p, ul, figure { margin: 0; padding: 0; font-weight: 400; }
.defs { position: absolute; width: 0; height: 0; }

.slide { display: grid; grid-template-columns: 394px minmax(0, 1fr) 350px; }
.brand { padding: 92px 0 0 170px; }
.logo { display: block; width: 78px; height: 78px; overflow: hidden; }
.logo .gap { fill: #fff; }
.shot { padding-top: 122px; }
.desk { display: grid; grid-template-columns: minmax(0, 1078fr) minmax(0, 2018fr); }
figcaption { padding: 32px 0 0 16px; font: 38px/52px Lato, sans-serif; color: #111; }

/* Rhino window */
.rhino { overflow: hidden; background: #e9ebef; font-size: 23px; display: flex; flex-direction: column; color: #444; white-space: nowrap; }
.r-title { height: 48px; background: #fff; display: flex; align-items: center; gap: 8px; padding-top: 2px; color: #a2a2a2; }
.r-logo { width: 24px; height: 34px; flex: none; }
.r-menu { height: 38px; background: #fff; display: flex; align-items: center; gap: 23px; color: #777; padding-top: 2px; }
.r-log { margin-top: 7px; background: #fff; border-left: 3px solid #e4e6ea; padding-left: 2px; font-size: 24px; color: #222; }
.r-log p { line-height: 32px; overflow: hidden; }
.r-cmd { display: flex; height: 39px; align-items: center; border-top: 2px solid #c9ccd4; margin-left: -2px; padding: 0 0 3px 2px; font-size: 23px; font-weight: 700; color: #000; }
.r-cmd input { flex: 1; border: 0; background: none; font: inherit; outline: 0; min-width: 0; }
.r-filter { margin-top: 5px; height: 77px; border-top: 2px solid #d5d8e0; border-bottom: 2px solid #d5d8e0; display: grid; grid-template-columns: 206px 191px 206px 178px 115px 126px 1fr; padding: 0 0 18px 8px; font-size: 22px; }
.chk { display: flex; align-items: center; gap: 7px; }
.chk input { appearance: none; margin: 0; width: 26px; height: 26px; border: 2px solid #444; background: #fff; flex: none; }
.chk input:checked::after { content: ""; display: block; width: 7px; height: 14px; margin: 1px 0 0 8px; border: solid #444; border-width: 0 2px 2px 0; transform: rotate(38deg); }
.chk.off { color: #999; }
.chk.off input { border-color: #bbb; background: #eee; }
.r-tabs { height: 46px; display: flex; align-items: stretch; padding: 7px 0 0 3px; }
.r-tabs button { padding: 0 25px; border-bottom: 2px solid #cbd0e0; flex: none; }
.r-tabs button:last-child { flex: 1 0 auto; text-align: left; }
.r-tabs .on { border: 2px solid #cbd0e0; border-bottom-color: transparent; border-radius: 12px 6px 0 0; border-left-color: #dde; padding: 0 25px 0 21px; }
.r-tools { height: 76px; display: flex; padding-left: 1px; }
.r-tools button, .r-side button { width: 46px; height: 48px; flex: none; display: grid; place-items: center; position: relative; }
.r-tools svg, .r-side svg { width: 33px; height: 33px; fill: none; stroke: #222; stroke-width: 2; overflow: visible; }
.pg { fill: url(#greyg); }
.bl { fill: url(#blueg); }
.fly::after { content: ""; position: absolute; right: 0; bottom: 2px; border: solid transparent; border-width: 0 0 10px 10px; border-bottom-color: #777; }
.r-body { display: flex; min-height: 1140px; }
.r-side { width: 94px; flex: none; overflow: hidden; display: grid; grid-template-columns: 45px 45px; grid-auto-rows: 46px; align-content: start; padding: 4px 0 0; margin-top: 7px; border-top: 5px double #c8cdda; }
.r-side button { width: 46px; height: 46px; left: -10px; }
.view { flex: 1; position: relative; overflow: hidden; }
.scene { position: absolute; inset: 0; width: 100%; height: 100%; }
.view-name { position: absolute; left: 0; top: 0; height: 38px; width: 174px; background: #8298ee; color: #182046; font-size: 22px; font-weight: 700; text-align: left; padding-left: 17px; }
.view-name i { position: absolute; left: 151px; top: 3px; bottom: 3px; border-left: 2px solid #222c55; }
.view-name::after { content: ""; position: absolute; left: 156px; top: 15px; border: solid transparent; border-width: 9px 7px 0; border-top-color: #222; }
.edge { fill: none; stroke: #0c0c0c; stroke-width: 3; }
.edge .thin { stroke-width: 1.500; stroke: #222; }
.rim { fill: none; stroke: #b4101c; stroke-width: 2; }
.axis { fill: #666; font-size: 24px; }
.axis path { stroke: #555; stroke-width: 2; fill: none; }
.v-tabs { height: 45px; display: flex; padding-left: 94px; }
.v-tabs button { padding: 0 18px; }
.v-tabs .on { border: 2px solid #cdd4e2; border-top: 0; border-radius: 0 0 6px 18px; padding: 0 8px 0 19px; }
.v-tabs .on + button { padding-left: 25px; }
.v-tabs svg { width: 20px; height: 20px; fill: #fff; stroke: #777; stroke-width: 2; display: block; margin-left: 16px; }
.r-snap { height: 68px; display: flex; gap: 15px; padding: 0 0 2px 7px; font-size: 22px; }
.r-status { height: 28px; overflow: hidden; border-top: 2px solid #c9cedd; display: grid; grid-template-columns: 85px 177px 177px 177px 177px 1fr; }
.r-status span { line-height: 36px; text-align: center; border-right: 2px solid #c9cedd; }
.r-status span:first-child { text-align: left; }
.r-status span:last-child { text-align: left; padding-left: 7px; border: 0; display: flex; gap: 7px; }
.swatch { width: 22px; height: 30px; background: #000; margin-top: 6px; }

/* Grasshopper window */
.gh { border-left: 4px solid #777; border-top: 3px solid #666; overflow: hidden; font-size: 23px; background: #efefef; white-space: nowrap; display: flex; flex-direction: column; }
.g-title { height: 60px; background: #fff; display: flex; align-items: center; padding: 0 16px 2px 12px; gap: 72px; }
.g-title span { flex: 1; }
.g-title svg { width: 22px; height: 22px; display: block; fill: none; stroke: #111; stroke-width: 2; }
.g-menu { height: 56px; background: linear-gradient(90deg, #f0f0f0 40%, #fbfbfb 80%); display: flex; align-items: center; gap: 36px; padding-left: 22px; color: #111; }
.g-menu span { margin-left: auto; width: 56px; overflow: hidden; }
.g-tabs { height: 46px; display: flex; gap: 1px; font: 21px "Liberation Sans", Arial, sans-serif; color: #777; background: linear-gradient(90deg, #f6f6f6, #eee); border-bottom: 2px solid #aaa; }
.g-tabs button { padding: 4px 17px 0; min-width: 56px; flex: none; }
.g-tabs .on { color: #111; background: linear-gradient(#fff 40%, #d8d8d8); border: 2px solid #999; border-bottom: 0; border-radius: 12px 12px 0 0; margin: 1px 0 -2px -1px; padding: 0 14px 4px; }
.ribbon { height: 175px; background: linear-gradient(#d0d0d0, #efefef); display: flex; gap: 9px; padding: 5px 0 30px 5px; align-items: stretch; }
.grp { border: 1px solid #777; border-radius: 8px; overflow: hidden; background: linear-gradient(#d6d6d6, #ececec); display: flex; flex-direction: column; justify-content: space-between; height: 148px; }
.grp-body { display: flex; padding: 1px 1px 0; }
.cells { display: grid; grid-template-rows: 57px 57px; grid-auto-flow: column; grid-auto-columns: 58px; place-items: center; }
.cells + .cells { padding-left: 9px; margin-left: 9px; border-left: 1px solid #b0b0b0; }
.cells svg { width: 50px; height: 46px; overflow: visible; }
.cells text { font: 700 33px "Liberation Serif", serif; fill: #fff; text-anchor: middle; }
.cells .sm { font-size: 26px; }
.w4, .w3, .w2 { fill: none; stroke: #fff; stroke-width: 4; }
.w3 { stroke-width: 3; }
.w2 { stroke-width: 2; stroke: #ddd; }
.wf { fill: #fff; }
.tile { fill: url(#tileg); stroke: #222; stroke-width: 3; }
.ln svg { fill: none; stroke: #333; stroke-width: 3; }
.grp h3 { height: 29px; background: #1e1e1e; color: #fff; font: 20px/27px "Liberation Sans", Arial, sans-serif; text-align: center; position: relative; padding-right: 22px; }
.grp h3 svg { position: absolute; right: 4px; top: 6px; width: 16px; height: 16px; }
.g-bar { height: 65px; border-top: 3px solid #777; background: linear-gradient(#fff, #f2f2f2); display: flex; align-items: center; padding: 0 0 2px 1px; }
.g-bar button { width: 56px; height: 56px; display: grid; place-items: center; flex: none; }
.g-bar .slim { width: 54px; }
.g-bar .last { width: 48px; }
.g-bar svg { width: 44px; height: 46px; }
.g-bar .on { border: 2px solid #2a80b8; }
.g-bar .sep { width: 2px; height: 44px; background: #ccc; margin: 0 7px; }
.g-bar .sep.wide { margin: 0 14px; }
.g-bar .tri { border: solid transparent; border-width: 8px 6px 0; border-top-color: #000; margin: 0 8px; }
.g-bar select { appearance: none; width: 295px; height: 46px; border: 2px solid #777; font: 23px "Open Sans", sans-serif; padding: 0 6px; color: #222; margin: 0 4px 0 2px; background: #fff url("data:image/svg+xml,%3Csvg xmlns='http://www.w3.org/2000/svg' width='18' height='12'%3E%3Cpath d='M2 2l7 8 7-8' fill='none' stroke='%23555' stroke-width='2'/%3E%3C/svg%3E") no-repeat right 8px center; }
.g-bar .grow { flex: 1; }
.g-status { height: 39px; background: #efefef; border-top: 2px solid #d8d8d8; display: flex; justify-content: space-between; align-items: center; padding: 10px 46px 0 12px; font-size: 22px; color: #777; }

/* Grasshopper canvas */
.canvas { position: relative; height: 1237px; overflow: hidden; font-size: 24px; color: #222; background:
  linear-gradient(90deg, transparent 1673px, #d4d3d0 1673px 1675px, transparent 1675px),
  repeating-linear-gradient(transparent 0 66px, rgba(0,0,0,.04) 66px 68px, transparent 68px 121px),
  linear-gradient(90deg, transparent 1051px, rgba(0,0,0,.04) 1051px 1053px, transparent 1053px 1413px, rgba(0,0,0,.04) 1413px 1415px, transparent 1415px 1771px, rgba(0,0,0,.06) 1771px 1773px, transparent 1773px),
  linear-gradient(90deg, #f7f6f4 1674px, #ebeae7 1674px); }
.node, .legend, .num, .div-node, .panel-node, .wires { position: absolute; }
.kar { border: 2px solid #666; border-radius: 8px; background: linear-gradient(#fbfbfb, #e4e4e4 22px, #e0e0e0 300px, #cfcfcf); }
.kar.a { left: -150px; top: 7px; width: 571px; height: 1300px; }
.kar.b { left: 532px; top: -7px; width: 593px; height: 974px; }
.head { display: flex; }
.a .head { height: 299px; padding-top: 2px; }
.b .head { height: 205px; padding-top: 4px; }
.ins, .outs { display: flex; flex-direction: column; }
.ins { align-items: flex-end; }
.ins span, .outs span { line-height: 48px; }
.a .ins { width: 262px; }
.b .ins { width: 179px; }
.outs.wide span { line-height: 72px; }
.ins.tall span { line-height: 96px; }
.head svg { width: 56px; height: 56px; }
.a .head svg { margin: 118px 14px 0 11px; }
.b .head svg { margin: 67px 14px 0 12px; }
.kar h4 { margin: 0 1px; height: 41px; border: 2px solid #222; border-radius: 6px; background: linear-gradient(#8a8a8a, #777 30%, #444 32%, #333); color: #fff; font: 700 28px/34px "Liberation Sans", Arial, sans-serif; text-align: center; }
.kar h4.left { text-align: left; padding-left: 155px; }
.kar h4.r { padding-left: 148px; }
.box { margin: 9px 5px; border: 2px solid #777; border-radius: 8px; background: linear-gradient(#fafafa, #e6e6e6 24px, #c6c6c6); font: 28px "Liberation Sans", Arial, sans-serif; padding: 1px 7px 2px 13px; }
.row { height: 48px; display: flex; align-items: center; justify-content: space-between; }
.a .row { justify-content: flex-end; }
.row input { appearance: none; margin: 0; width: 28px; height: 28px; border: 4px solid #000; background: #fff; }
.row input[type=radio] { border-radius: 50%; }
.row input:checked { background: #000; background-clip: content-box; padding: 4px; box-shadow: inset 0 0 0 4px #fff; }
.sl { position: relative; height: 51px; margin: 0 12px 0 5px; background: linear-gradient(#aaa, #aaa) 0 26px / 100% 2px no-repeat, linear-gradient(#aaa, #aaa) 0 19px / 2px 15px no-repeat, linear-gradient(#aaa, #aaa) 100% 19px / 2px 15px no-repeat; }
.sl input { appearance: none; margin: 0 0 0 -8px; width: calc(100% + 16px); height: 53px; background: none; display: block; }
.sl input::-webkit-slider-thumb { appearance: none; width: 24px; height: 24px; border-radius: 50%; border: 5px solid #000; background: #fff; }
.sl output { position: absolute; top: 0; line-height: 50px; font-size: 30px; font-style: italic; color: #000; }
.o1 { left: 131px; }
.o0 { left: 226px; }
.o16 { left: 160px; }
.o2 { left: 117px; }
.o100 { right: 28px; }
.kar.a .row.seg { width: 215px; }
.kar.a .row.thr { width: 258px; }

.legend { left: 1207px; top: -10px; width: 451px; height: 711px; display: flex; }
.legend .l-in { width: 150px; background: linear-gradient(#b0aebf, #a2a1b0 50%, #8e8c9c); border: 2px solid #333; border-right: 0; border-radius: 0 0 0 8px; padding: 0 14px; text-align: right; display: flex; flex-direction: column; }
.l-in span { line-height: 237px; }
.l-in span:first-child { margin-top: -8px; }
.legend ul { list-style: none; width: 279px; border: solid #111; border-width: 0 2px; font-size: 25px; color: #302838; flex: none; align-self: flex-start; }
.legend li { height: 53px; line-height: 44px; border: 2px solid #fff; border-bottom: 3px solid #111; padding-left: 20px; overflow: hidden; }
.legend li:first-child { height: 60px; line-height: 62px; padding-left: 13px; }
.legend .zig { width: 24px; height: 711px; flex: none; margin-top: 0; }
.zig path { fill: #96949f; stroke: #555; stroke-width: 2; }
.legend::after { content: ""; position: absolute; left: 149px; right: 22px; bottom: 0; height: 14px; background: #8e8c9c; border-bottom: 2px solid #333; }
.legend .c0 { background: #ff0; border-color: #ff0 #ff0 #111; }
.c1 { background: #fff; }
.c2 { background: #ffe5ff; }
.c3 { background: #fccbff; }
.c4 { background: #ffb0ff; }
.c5 { background: #ff98ff; }
.c6 { background: #ff7cff; }
.c7 { background: #ff64ff; }
.c8 { background: #ff4aff; }
.c9 { background: #ff30ff; }
.c10 { background: #ff18ff; }
.c11 { background: #f0f; }
.c12 { background: #32cd32; }

h5 { font-size: 32px; line-height: 40px; font-style: italic; text-align: center; color: #333; }
.num { left: 525px; width: 492px; font-size: 25px; }
.n1 { top: 1000px; }
.n2 { top: 1149px; }
.num h5 { margin-bottom: 4px; }
.num label { display: flex; height: 51px; border: 2px solid #444; border-radius: 8px; overflow: hidden; background: linear-gradient(#fff, #d4d4d4); }
.num label span { width: 200px; background: linear-gradient(#c2c1d0, #9b9aab 30%, #9291a2); border-right: 2px solid #444; line-height: 46px; text-align: center; }
.track { position: relative; flex: 1; margin: 0 22px; background: repeating-linear-gradient(90deg, #bbb 0 1px, transparent 1px 24px) 0 15px / 100% 10px no-repeat, linear-gradient(#bbb, #bbb) 0 25px / 100% 1px no-repeat; }
.track input { appearance: none; background: none; width: 100%; margin: 0; height: 47px; display: block; }
.track input::-webkit-slider-thumb { appearance: none; width: 15px; height: 15px; border: 3px solid #000; background: #fff; transform: rotate(45deg); }
.track output { position: absolute; top: 0; line-height: 46px; left: 46px; font-size: 24px; }
.n2 .track output { left: 66px; }
.div-node { left: 1159px; top: 1004px; width: 213px; }
.div-body { margin-top: 5px; height: 109px; border: 2px solid #333; border-radius: 8px; background: linear-gradient(#cbcad6, #b8b7c6 18%, #a09fb0 20%, #8c8b9c); display: flex; align-items: center; padding-left: 15px; gap: 21px; }
.div-body svg { width: 40px; height: 46px; }
.div-body text { font: 700 22px "Open Sans", sans-serif; }
.ab { display: flex; flex-direction: column; line-height: 48px; }
.panel-node { left: 1451px; top: 993px; width: 195px; }
.panel-body { margin-top: 3px; height: 137px; border: 2px solid #444; border-radius: 8px; background: linear-gradient(#d8d04a 46px, #fff95c 46px); font: 22px "Liberation Mono", monospace; color: #555; }
.path { height: 46px; line-height: 44px; text-align: right; padding-right: 32px; }
.val { display: flex; gap: 15px; padding-left: 10px; line-height: 34px; background: linear-gradient(#d0c840, #d0c840) 32px 0 / 1px 100% no-repeat; height: 87px; }
.wires { left: 0; top: 0; pointer-events: none; }
.wire { fill: none; stroke: #666; stroke-width: 9; }
.wire.w { stroke-width: 7; }
.wire.in { stroke: #f0efed; stroke-width: 3; }
.grip { fill: #fff; stroke: #000; stroke-width: 4; }
```
FILE: script.js
```js
const NS = 'http://www.w3.org/2000/svg';
function add(parent, d, stroke, width) {
  const p = document.createElementNS(NS, 'path');
  p.setAttribute('d', d);
  p.setAttribute('fill', 'none');
  p.setAttribute('stroke', stroke);
  p.setAttribute('stroke-width', width);
  parent.appendChild(p);
}

/* Construction plane: two fans of lines, each meeting at its vanishing point */
const grid = document.getElementById('grid');
function fan(vx, vy, start, step, grow, count) {
  let minor = '', major = '', y = start;
  for (let i = 0; i < count; i++) {
    const k = (1700 - vx) / (490 - vx), far = vx < 0 ? 1700 : 488;
    const line = vx < 0
      ? `M488 ${y}L${far} ${vy + (y - vy) * k}`
      : `M488 ${y}L1500 ${y + (vy - y) * (1010 / (vx - 490))}`;
    if (i % 5 === 0) major += line; else minor += line;
    y += step;
    step *= grow;
  }
  add(grid, minor, 'rgba(60,70,80,.08)', 1);
  add(grid, major, 'rgba(60,65,75,.26)', 2);
}
fan(-1543, -87, 100, 15, 1.006, 110);
fan(4185, -838, 520, 10, 1.004, 220);

/* Shell outline, in drawing units that are scaled to the scene */
const X = x => 480 + x / 1.568, Y = y => 780 + y / 1.96;
const back = [[140,750],[150,700],[170,665],[205,610],[245,560],[285,500],[330,440],[385,365],[450,300],[500,255],[600,190],[700,150],[760,136],[830,127],[930,130],[1010,150],[1080,176],[1150,205],[1280,270],[1370,320],[1420,345],[1434,365],[1435,400]];
const front = [[1410,382],[1385,372],[1370,375],[1335,450],[1300,550],[1265,700],[1225,860],[1190,1025],[1165,1140],[1130,1260],[943,1327],[860,1240],[700,1045],[570,890],[475,800],[430,755],[370,710],[300,670],[245,657],[205,657],[175,695],[140,750]];
const outline = 'M' + back.concat(front).map(p => X(p[0]).toFixed(1) + ' ' + Y(p[1]).toFixed(1)).join('L') + 'Z';
for (const id of ['shell-clip', 'shell-fill', 'shell-line']) document.getElementById(id).setAttribute('d', outline);

/* Distance from the front corner to the back silhouette along an angle */
const F = [943, 1327];
const polar = back.map(p => [Math.atan2(p[1] - F[1], p[0] - F[0]), Math.hypot(p[0] - F[0], p[1] - F[1])]).sort((a, b) => a[0] - b[0]);
function reach(t) {
  if (t <= polar[0][0]) return polar[0][1];
  for (let i = 1; i < polar.length; i++) if (t <= polar[i][0]) {
    const f = (t - polar[i - 1][0]) / (polar[i][0] - polar[i - 1][0] || 1);
    return polar[i - 1][1] + f * (polar[i][1] - polar[i - 1][1]);
  }
  return polar[polar.length - 1][1];
}
/* Lattice steps stay even near the front and close up towards the silhouette */
const K = 1.45, POW = K / (K - 1);
function vertex(i, j) {
  const x = i * 47 + j * 16, y = -i * 17 - j * 61;
  const r = Math.hypot(x, y);
  if (!r) return F;
  const t = Math.atan2(y, x);
  const R = reach(t);
  let q = r / (R * K);
  if (q > 1.03 || y > 20) return null;
  q = Math.min(q, 1);
  const s = R * (K * q - (K - 1) * Math.pow(q, POW));
  return [F[0] + s * Math.cos(t), F[1] + s * Math.sin(t)];
}
let d = '';
function seg(a, b) {
  if (a && b) d += `M${X(a[0]).toFixed(1)} ${Y(a[1]).toFixed(1)}L${X(b[0]).toFixed(1)} ${Y(b[1]).toFixed(1)}`;
}
for (let i = -50; i < 30; i++) for (let j = -5; j < 60; j++) {
  const v = vertex(i, j);
  seg(v, vertex(i + 1, j));
  seg(v, vertex(i, j + 1));
  seg(v, vertex(i - 1, j + 1));
}
add(document.getElementById('mesh'), d, '#b4101c', 1.4);

/* Torn right edge of the legend component */
let z = 'M0 0H14';
for (let y = 0; y < 711; y += 20) z += `L23 ${Math.min(y + 10, 711)}L14 ${Math.min(y + 20, 711)}`;
document.getElementById('zig').setAttribute('d', z + 'H0Z');
```
